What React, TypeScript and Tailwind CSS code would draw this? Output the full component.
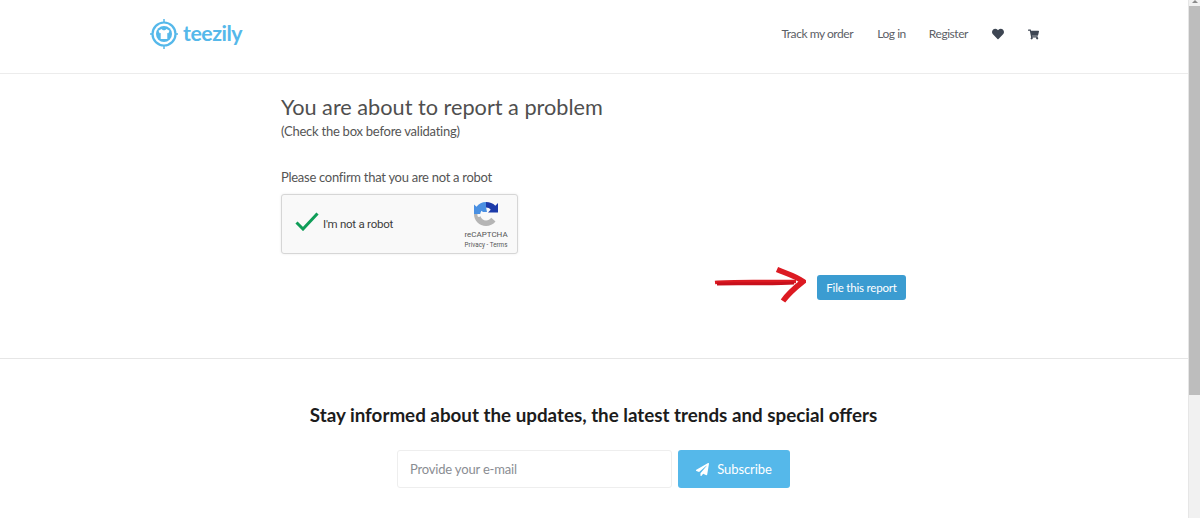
import React from "react";
import { FaHeart, FaShoppingCart, FaPaperPlane } from "react-icons/fa";

function Logo() {
  return (
    <div className="flex items-center gap-[5px]">
      <svg width="28" height="30" viewBox="0 0 28 30" className="text-[#55b8ea]">
        <circle cx="14" cy="15" r="11.500" fill="none" stroke="currentColor" strokeWidth="2.200" />
        <circle cx="14" cy="15" r="8" fill="currentColor" />
        <path d="M14 0v4M14 26v4M0 15h3M25 15h3" stroke="currentColor" strokeWidth="1.500" />
        <path d="M11.500 10c.7 1 1.500 1.300 2.500 1.300s1.800-.3 2.500-1.300l3 1.800-1.100 2.500-1.100-.4V20h-6.600v-6.100l-1.100.4-1.100-2.500z" fill="#fff" />
      </svg>
      <span className="text-[21.300px] leading-none font-bold text-[#55b8ea] tracking-[-0.45px] pb-[1px]">teezily</span>
    </div>
  );
}

function Recaptcha() {
  return (
    <div className="w-[237px] h-[60px] bg-[#f9f9f9] border border-[#d6d6d6] rounded-[3px] shadow-[0_0_3px_rgba(0,0,0,0.08)] flex items-center justify-between pl-[13px] pr-[9px] font-['Roboto',sans-serif]">
      <div className="flex items-center gap-[5px]">
        <svg width="24" height="19" viewBox="0 0 24 19" className="shrink-0 mb-[6px]">
          <path d="M1.500 10.500l6.500 6.500L22.500 1.500" fill="none" stroke="#0f9d58" strokeWidth="3" />
        </svg>
        <span className="text-[11.500px] tracking-[-0.25px] text-[#3c3c3c] mt-[1px] ml-[-1px]">I'm not a robot</span>
      </div>
      <div className="flex flex-col items-center w-[44px] pt-[3px]">
        <svg width="26" height="26" viewBox="0 0 26 26">
          <path d="M13 1C9 1 5.800 2.800 3.500 5.700L1 3.500V13h6.200c.1-1 .5-2.300 1.300-3.300L10 11h4l-1-5V1z" fill="#4a90e2" />
          <path d="M13 1v5.500c2 0 3.600.9 4.700 2.300L15 11.500h10V2l-2.700 2.700C20 2.300 16.700 1 13 1z" fill="#1c3aa9" />
          <path d="M1 13c0 6.600 5.400 12 12 12 3.700 0 7.200-1.700 9.500-4.500l-4.200-3.800c-1.300 1.600-3.100 2.800-5.300 2.800-2.400 0-5-2-5.700-4.500-.4 1-2 1.300-2.500.5-.6-.9-.3-1.800-.3-2.500z" fill="#b5b5b5" />
        </svg>
        <span className="text-[8px] leading-[10px] text-[#555] mt-[3px]">reCAPTCHA</span>
        <span className="text-[6.300px] leading-[9px] text-[#555] whitespace-nowrap mt-[1px]">Privacy - Terms</span>
      </div>
    </div>
  );
}

function Arrow() {
  return (
    <svg width="92" height="38" viewBox="0 0 92 38" className="shrink-0">
      <path d="M1 15.500C20 13.500 60 15 82 14.500" fill="none" stroke="#dc1a22" strokeWidth="3.500" />
      <path d="M3 17C25 16.500 60 17.500 80 16" fill="none" stroke="#c8101c" strokeWidth="3" />
      <path d="M63 2.500C71 6 82 9 89 14.500C82 20 74 27 69 34" fill="none" stroke="#dc1a22" strokeWidth="5.500" />
    </svg>
  );
}

export default function App() {
  return (
    <div className="h-[518px] overflow-hidden flex bg-white font-['Lato',sans-serif] text-[#555]">
      <div className="flex-1 min-w-0">
        <header className="h-[74px] border-b border-[#ececec] flex items-center justify-between pl-[150px] pr-[149px] pb-[5px]">
          <Logo />
          <nav className="flex items-center text-[12px] tracking-[-0.45px] text-[#5c6066]">
            <a>Track my order</a>
            <a className="ml-[24px]">Log in</a>
            <a className="ml-[23px]">Register</a>
            <FaHeart className="ml-[24px] text-[12px] text-[#3e4653]" />
            <FaShoppingCart className="ml-[24px] text-[11px] text-[#3e4653]" />
          </nav>
        </header>
        <main className="h-[285px] border-b border-[#e6e6e6] pl-[281px] pt-[18px]">
          <h1 className="text-[21.700px] leading-[30px] text-[#4f4f4f]">You are about to report a problem</h1>
          <p className="text-[13px] tracking-[-0.24px] leading-[18px] text-[#555]">(Check the box before validating)</p>
          <p className="text-[13px] tracking-[-0.28px] leading-[18px] mt-[28px] mb-[8px] text-[#555]">Please confirm that you are not a robot</p>
          <Recaptcha />
          <div className="flex items-start mt-[13px] ml-[433px]">
            <Arrow />
            <button className="mt-[8px] ml-[11px] w-[89px] h-[25px] rounded-[3px] bg-[#3b9cd1] text-white text-[11.500px] tracking-[-0.2px]">File this report</button>
          </div>
        </main>
        <section className="flex flex-col items-center pr-[1px]">
          <h2 className="text-[18.800px] leading-[26px] font-bold text-[#1c1c1c] mt-[43px]">Stay informed about the updates, the latest trends and special offers</h2>
          <div className="flex mt-[22px] gap-[6px]">
            <div className="w-[275px] h-[38px] border border-[#eeeeee] rounded-[3px] flex items-center pl-[12px] pt-[1px] text-[13px] tracking-[-0.18px] text-[#8a8d93]">Provide your e-mail</div>
            <button className="w-[112px] h-[38px] pt-[1px] rounded-[3px] bg-[#55b8ea] text-white text-[13px] tracking-[-0.1px] flex items-center justify-center gap-[8px]">
              <FaPaperPlane className="text-[13px]" />
              Subscribe
            </button>
          </div>
        </section>
      </div>
      <div className="w-[12px] h-full bg-[#f1f1f1] border-l border-[#e6e6e6] flex flex-col items-center">
        <div className="h-[6px]">
          <svg width="8" height="4" viewBox="0 0 8 4"><path d="M4 0l3 3H1z" fill="#8a8a8a" /></svg>
        </div>
        <div className="w-[11px] h-[389px] bg-[#bdbdbd]" />
      </div>
    </div>
  );
}
